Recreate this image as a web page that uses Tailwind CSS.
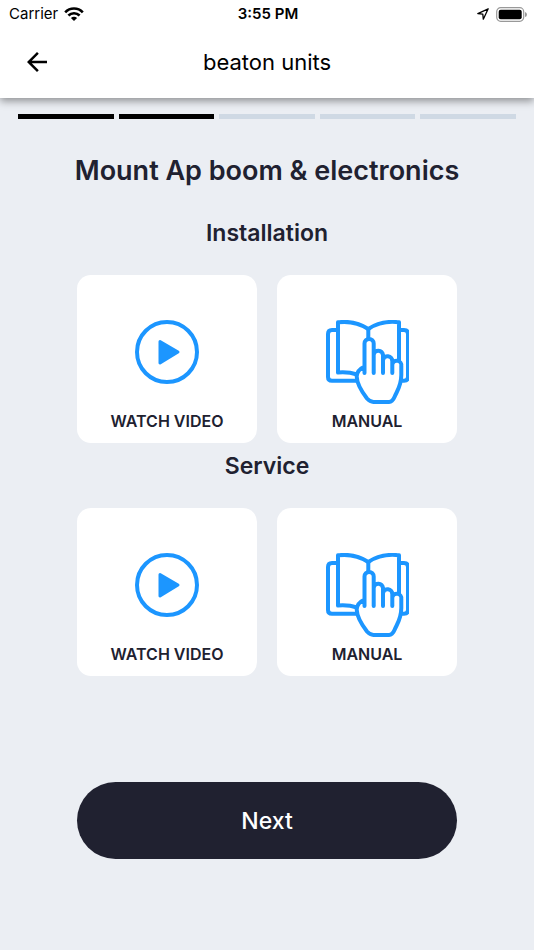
<!DOCTYPE html>
<html lang="en">
<head>
  <meta charset="UTF-8">
  <meta name="viewport" content="width=device-width, initial-scale=1.0">
  <title>beaton units</title>
  <script src="https://cdn.jsdelivr.net/npm/@tailwindcss/browser@4"></script>
</head>
<body class="min-h-screen bg-[#ebeef3] font-['Inter',sans-serif] text-[#202130]">
  <!-- Icons shared by the cards -->
  <svg class="hidden">
    <symbol id="icon-play" viewBox="0 0 64 64">
      <circle cx="32" cy="32" r="30" fill="none" stroke="#1c96ff" stroke-width="4"/>
      <path d="M25 21.500L43 32L25 43Z" fill="#1c96ff" stroke="#1c96ff" stroke-width="3" stroke-linejoin="round"/>
    </symbol>
    <symbol id="icon-manual" viewBox="0 0 83 84">
      <g fill="none" stroke="#1c96ff" stroke-width="4" stroke-linejoin="round">
        <path d="M12 10H6Q2 10 2 14V57Q2 60.800 6 60.800H32"/>
        <path d="M31 54.500C25 52.500 18 52 12 52.500V2.300C24 .8 34 3.500 42.300 9C50.500 3.500 61 .8 73 2.300V41.500"/>
        <path d="M42.300 9V19"/>
        <path d="M73 10H78Q82 10 82 14V57Q82 60.800 78 60.800H75"/>
        <path stroke-linecap="round" d="M38.500 53V23.500A4.600 4.600 0 0 1 47.700 23.500V53M47.700 34.500A4.700 4.700 0 0 1 57 35V53M57 40A4.700 4.700 0 0 1 66.300 41V53M66.300 44.500A4.500 4.500 0 0 1 75.300 46V55C75.300 66 71 71 68.500 77Q66.500 81.800 63 82H47.500Q44 81.800 41 78.500C36 72 31 65 30.700 56.500Q31 50 38.500 46.500"/>
      </g>
    </symbol>
  </svg>

  <header class="relative bg-white pb-[2px] text-black shadow-[0_3px_8px_rgba(0,0,0,0.4)]">
    <div class="grid grid-cols-3 items-center h-7 pl-[9px] pr-[7px] text-[15px] leading-5">
      <div class="flex items-center gap-[6px]">
        <span>Carrier</span>
        <svg class="w-5 h-[14px]" viewBox="0 0 20 14" fill="none" stroke="#000" stroke-width="2.600">
          <path d="M1.200 5.300C6 .3 14 .3 18.800 5.300"/>
          <path d="M4.400 8.500C7.500 5.400 12.500 5.400 15.600 8.500"/>
          <path d="M10 14L6.900 11C8.700 9.400 11.300 9.400 13.100 11Z" fill="#000" stroke="none"/>
        </svg>
      </div>
      <span class="text-center font-semibold">3:55 PM</span>
      <div class="flex items-center justify-end gap-[7px]">
        <svg class="w-3 h-3" viewBox="0 0 12 12" fill="none" stroke="#000" stroke-width="1.300" stroke-linejoin="round">
          <path d="M11.200 .8L.8 5.600L5.800 6.100L6.300 11.200Z"/>
        </svg>
        <svg class="w-[31px] h-[15px]" viewBox="0 0 31 15">
          <rect x=".7" y=".7" width="27" height="13.600" rx="4" fill="none" stroke="#999" stroke-width="1.200"/>
          <rect x="2.700" y="2.700" width="23" height="9.600" rx="2" fill="#000"/>
          <path d="M29 5Q31 5.500 31 7.500Q31 9.500 29 10Z" fill="#999"/>
        </svg>
      </div>
    </div>
    <div class="grid grid-cols-[30px_1fr_30px] items-center h-[68px] px-[22px]">
      <button type="button" aria-label="Back">
        <svg class="w-[30px] h-[30px]" viewBox="0 0 24 24">
          <path d="M20 11H7.830l5.590-5.590L12 4l-8 8 8 8 1.410-1.410L7.830 13H20v-2z"/>
        </svg>
      </button>
      <h1 class="text-center text-[22px] leading-7">beaton units</h1>
    </div>
  </header>

  <main>
    <div class="grid grid-cols-5 gap-[5px] px-[18px] pt-4">
      <div class="h-[5px] bg-black"></div>
      <div class="h-[5px] bg-black"></div>
      <div class="h-[5px] bg-[#cfd9e4]"></div>
      <div class="h-[5px] bg-[#cfd9e4]"></div>
      <div class="h-[5px] bg-[#cfd9e4]"></div>
    </div>

    <div class="px-[77px] text-center">
      <h2 class="-mx-4 mt-9 text-[27px] leading-8 font-semibold">Mount Ap boom &amp; electronics</h2>

      <h3 class="mt-[30px] text-[23px] leading-8 font-semibold">Installation</h3>
      <div class="mt-[26px] grid grid-cols-2 gap-5">
        <button type="button" class="flex flex-col items-center rounded-[14px] bg-white pt-[45px] pb-3">
          <span class="h-21"><svg class="w-16 h-16"><use href="#icon-play"/></svg></span>
          <span class="mt-[7px] text-base leading-5 font-semibold">WATCH VIDEO</span>
        </button>
        <button type="button" class="flex flex-col items-center rounded-[14px] bg-white pt-[45px] pb-3">
          <span class="h-21"><svg class="w-[83px] h-21"><use href="#icon-manual"/></svg></span>
          <span class="mt-[7px] text-base leading-5 font-semibold">MANUAL</span>
        </button>
      </div>

      <h3 class="mt-[7px] text-[23px] leading-8 font-semibold">Service</h3>
      <div class="mt-[26px] grid grid-cols-2 gap-5">
        <button type="button" class="flex flex-col items-center rounded-[14px] bg-white pt-[45px] pb-3">
          <span class="h-21"><svg class="w-16 h-16"><use href="#icon-play"/></svg></span>
          <span class="mt-[7px] text-base leading-5 font-semibold">WATCH VIDEO</span>
        </button>
        <button type="button" class="flex flex-col items-center rounded-[14px] bg-white pt-[45px] pb-3">
          <span class="h-21"><svg class="w-[83px] h-21"><use href="#icon-manual"/></svg></span>
          <span class="mt-[7px] text-base leading-5 font-semibold">MANUAL</span>
        </button>
      </div>

      <button type="button" class="mt-[106px] w-full h-[77px] rounded-full bg-[#202130] text-[23px] leading-8 font-medium text-white">Next</button>
    </div>
  </main>
</body>
</html>
